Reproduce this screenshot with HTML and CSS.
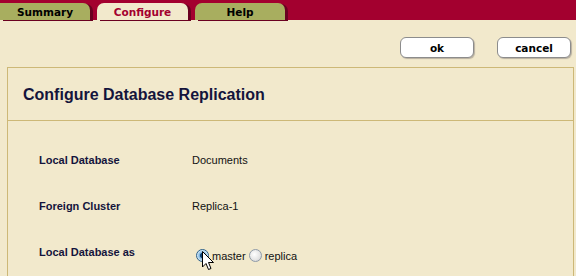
FILE: index.html
```html
<!DOCTYPE html>
<html>
<head>
<meta charset="utf-8">
<link rel="stylesheet" href="styles.css">
</head>
<body>
<div class="tabbar">
  <div class="tab">Summary</div>
  <div class="tab active">Configure</div>
  <div class="tab">Help</div>
</div>
<div class="toolbar">
  <button class="btn">ok</button>
  <button class="btn">cancel</button>
</div>
<div class="panel">
  <div class="panel-head"><h1 class="title">Configure Database Replication</h1></div>
  <div class="rows">
    <div class="row"><div class="label">Local Database</div><div class="value">Documents</div></div>
    <div class="row"><div class="label">Foreign Cluster</div><div class="value">Replica-1</div></div>
    <div class="row last"><div class="label">Local Database as</div>
      <div class="value radios">
        <span class="radio checked"></span><span class="rlabel">master</span>
        <span class="radio"></span><span class="rlabel">replica</span>
        <svg class="cursor" width="13" height="20" viewBox="0 0 13 20"><path d="M0.5 0.5 L0.5 16 L4 12.5 L6.5 18.5 L9 17.5 L6.5 11.5 L11.5 11.5 Z" fill="#fff" stroke="#000" stroke-width="1"/></svg>
      </div>
    </div>
  </div>
</div>
</body>
</html>
```
FILE: styles.css
```css
* { box-sizing: border-box; }
body {
  margin: 0;
  background: #f2e9cc;
  font-family: "Liberation Sans", Arial, sans-serif;
  height: 276px;
  overflow: hidden;
}
.tabbar {
  display: flex;
  gap: 7px;
  height: 20px;
  padding-top: 3px;
  background: #a3002f;
}
.tab {
  width: 90px;
  height: 17px;
  background: #a8ae5f;
  border-radius: 7px 7px 0 0;
  box-shadow: 3px 1px 0 #6a0020;
  font-family: "DejaVu Sans", Verdana, sans-serif;
  font-weight: bold;
  font-size: 10.5px;
  color: #000;
  text-align: center;
  line-height: 17px;
  padding-top: 1px;
}
.tab:first-child { border-top-left-radius: 0; }
.tab.active {
  background: #f2e9cc;
  color: #a3002f;
  width: 91px;
}
.toolbar {
  display: flex;
  justify-content: flex-end;
  gap: 23px;
  padding: 17px 5px 0 0;
  height: 47px;
}
.btn {
  width: 74px;
  height: 21px;
  background: #fff;
  border: 1px solid #8c8c8c;
  border-radius: 6px;
  box-shadow: 1px 1px 1px #b8b0a0;
  font-family: "DejaVu Sans", Verdana, sans-serif;
  font-weight: bold;
  font-size: 10.5px;
  color: #000;
  padding: 0;
}
.panel {
  margin-left: 7px;
  width: 567px;
  border: 1px solid #cdb877;
  border-bottom: none;
  height: 209px;
  overflow: hidden;
}
.panel-head {
  height: 53px;
  border-bottom: 1px solid #cdb877;
  display: flex;
  align-items: center;
  padding-left: 15px;
}
.title {
  margin: 0;
  font-size: 16px;
  font-weight: bold;
  color: #14143c;
  padding-top: 2px;
}
.rows {
  padding: 33px 0 0 31px;
}
.row {
  display: flex;
  height: 46px;
  align-items: flex-start;
  font-size: 11px;
}
.row.last { height: 30px; }
.label {
  width: 153px;
  font-weight: bold;
  color: #14143c;
}
.value { color: #111; }
.radios {
  display: flex;
  align-items: center;
  margin-top: 3px;
  position: relative;
  margin-left: 4px;
}
.radio {
  width: 13px;
  height: 13px;
  border-radius: 50%;
  border: 1px solid #8e9aa8;
  background: radial-gradient(circle at 40% 40%, #fff 0, #e4e4e4 60%, #c8c8c8 100%);
  margin-right: 3px;
  position: relative;
}
.radio.checked {
  border-color: #2a5f8a;
  background: radial-gradient(circle at 50% 50%, #0c3f70 0, #0c3f70 28%, #78b0dd 38%, #d8ecf8 70%, #9fc4e0 100%);
}
.rlabel { margin-right: 3px; }
.cursor {
  position: absolute;
  left: 6px;
  top: 2px;
}
```
